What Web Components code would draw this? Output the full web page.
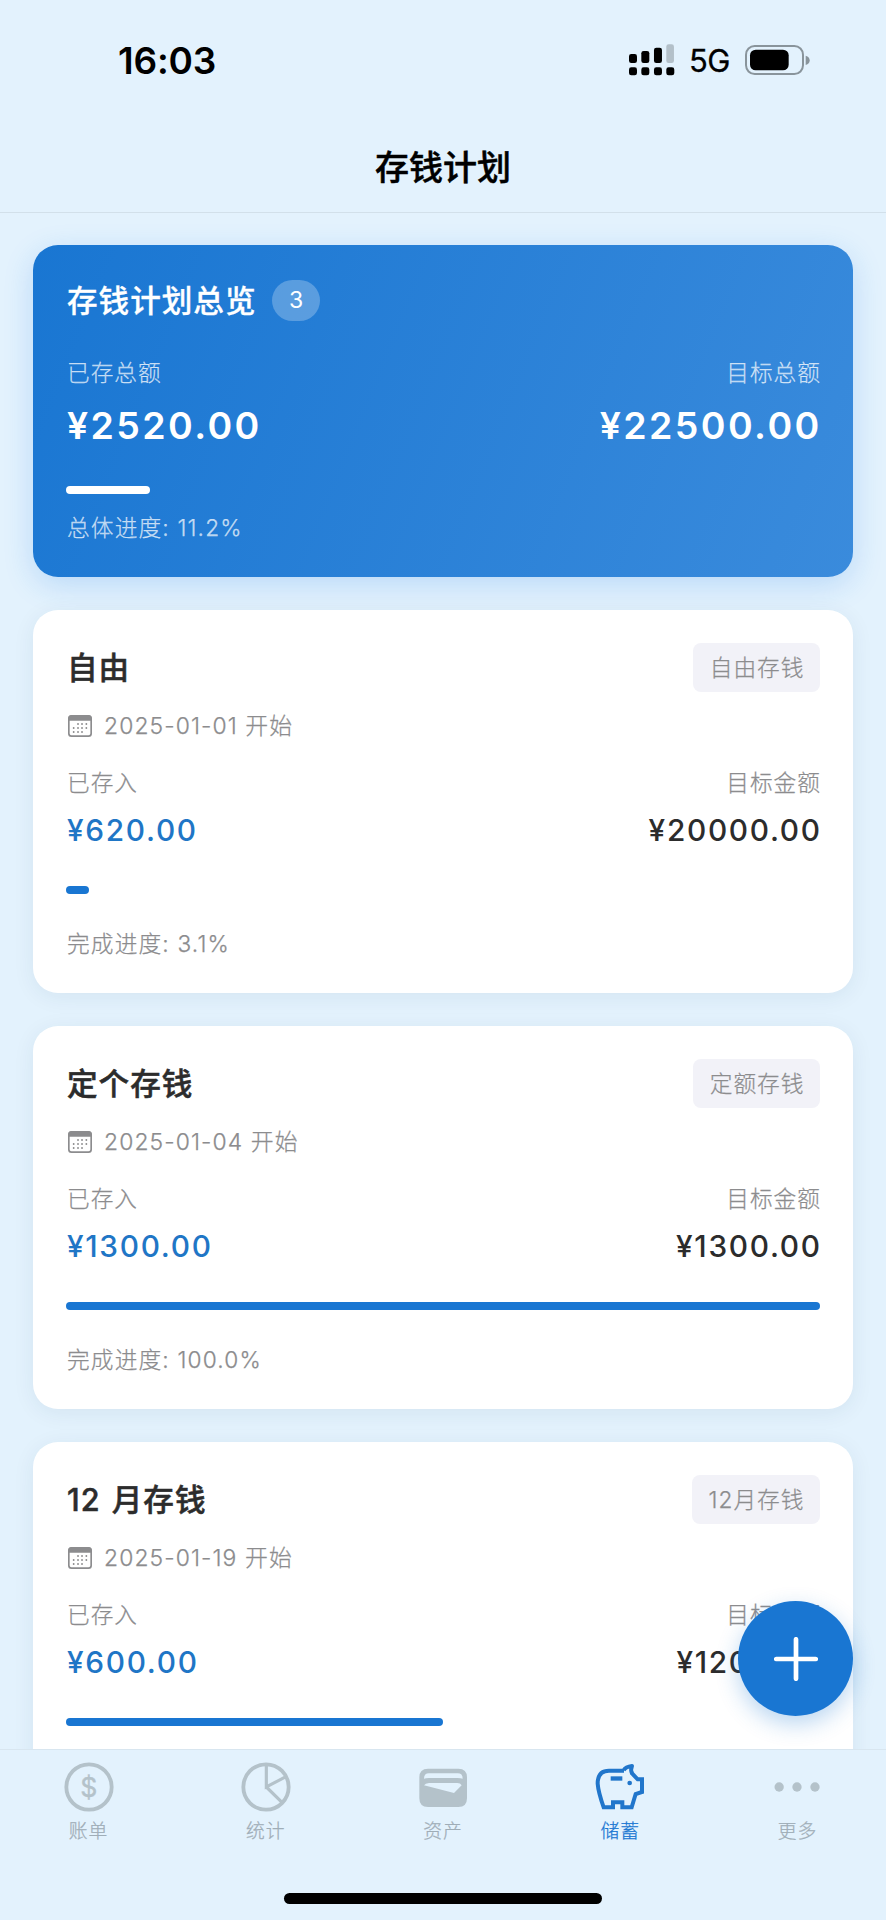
<!DOCTYPE html>
<html lang="zh-CN">
<head>
<meta charset="utf-8">
<title>存钱计划</title>
<style>
  html, body { margin: 0; height: 100%; }
  body {
    --bg: #e3f2fd;
    --primary: #1976d2;
    --muted: #8c8c8e;
    --ink: #2c2c2c;
    background: var(--bg);
    font-family: Inter, "Noto Sans CJK SC", sans-serif;
    overflow: hidden;
  }
</style>
</head>
<body>
<savings-app>
  <overview-card heading="存钱计划总览" count="3" saved="¥2520.00" target="¥22500.00" percent="11.2"></overview-card>
  <plan-card heading="自由" kind="自由存钱" date="2025-01-01" saved="¥620.00" target="¥20000.00" percent="3.1"></plan-card>
  <plan-card heading="定个存钱" kind="定额存钱" date="2025-01-04" saved="¥1300.00" target="¥1300.00" percent="100.0"></plan-card>
  <plan-card heading="12 月存钱" kind="12月存钱" date="2025-01-19" saved="¥600.00" target="¥1200.00" percent="50.0" no-caption></plan-card>
</savings-app>

<script>
class BaseElement extends HTMLElement {
  connectedCallback() {
    if (this.shadowRoot) return;
    this.attachShadow({ mode: 'open' }).innerHTML = this.render();
  }
  a(name) { return this.getAttribute(name) || ''; }
}

customElements.define('status-bar', class extends BaseElement {
  render() {
    return `<style>
      :host { display: flex; align-items: center; height: 121px; box-sizing: border-box; padding: 0 76.5px 0 118px; color: #000; }
      .time { font-size: 37px; font-weight: 600; line-height: 40px; letter-spacing: -0.2px; margin-right: auto; }
      .net { font-size: 31px; font-weight: 400; line-height: 40px; letter-spacing: -0.6px; margin: 1px 15px 0 14.5px; -webkit-text-stroke: .3px; }
      svg { display: block; flex: none; margin-top: -2px; }
    </style>
    <span class="time">16:03</span>
    <svg width="45.3" height="32" viewBox="558 131 136 96">
      <g fill="#000"><rect x="558" y="161" width="24" height="27" rx="7"/><rect x="595" y="152" width="24" height="36" rx="7"/><rect x="633" y="142" width="24" height="46" rx="7"/>
      <rect x="558" y="201" width="24" height="24" rx="7"/><rect x="595" y="201" width="24" height="24" rx="7"/><rect x="633" y="201" width="24" height="24" rx="7"/><rect x="670" y="201" width="24" height="24" rx="7"/></g>
      <rect x="670" y="132" width="23" height="56" rx="7" fill="#b3c0c9"/>
    </svg>
    <span class="net">5G</span>
    <svg width="64.7" height="30" viewBox="904 133 194 90">
      <rect x="907" y="136" width="171" height="84" rx="26" fill="none" stroke="#89949b" stroke-width="6"/>
      <rect x="919" y="147" width="116" height="62" rx="17" fill="#000"/>
      <path d="M1086 165Q1098 169 1098 179Q1098 190 1086 193Z" fill="#89949b"/>
    </svg>`;
  }
});

customElements.define('nav-title', class extends BaseElement {
  render() {
    return `<style>
      :host { display: flex; align-items: center; justify-content: center; height: 92px; box-sizing: border-box; padding-top: 3px; border-bottom: 1px solid #d2e0ea; color: #000; font-size: 34px; font-weight: 500; -webkit-text-stroke: .5px; line-height: 40px; }
    </style><slot></slot>`;
  }
});

customElements.define('progress-line', class extends BaseElement {
  render() {
    return `<style>
      :host { display: block; height: 8.3px; color: var(--primary); }
      div { height: 100%; width: ${this.a('value')}%; border-radius: 5px; background: currentColor; }
    </style><div></div>`;
  }
});

customElements.define('amount-pair', class extends BaseElement {
  render() {
    return `<style>
      :host { display: flex; justify-content: space-between; }
      .col { display: flex; flex-direction: column; }
      .end { text-align: right; margin-right: -1px; }
      .end .value { margin-right: -.7px; }
      .label { font-size: 22.7px; font-weight: 300; -webkit-text-stroke: .25px; line-height: 32px; letter-spacing: 1px; color: var(--label); }
      .value { margin-top: var(--value-gap, 7.5px); font-size: var(--value-size, 29.8px); font-weight: var(--value-weight, 470); line-height: 46px; letter-spacing: var(--value-spacing, 1.7px); }
      .saved { color: var(--saved); } .target { color: var(--target); }
    </style>
    <div class="col"><span class="label">${this.a('left')}</span><span class="value saved">${this.a('saved')}</span></div>
    <div class="col end"><span class="label">${this.a('right')}</span><span class="value target">${this.a('target')}</span></div>`;
  }
});

customElements.define('overview-card', class extends BaseElement {
  render() {
    return `<style>
      :host { display: block; height: 332px; box-sizing: border-box; padding: 35px 33px 0; border-radius: 25px; color: #fff;
        background: linear-gradient(112deg, #1976d2, #3a8bdc); box-shadow: 0 8px 30px rgba(25,118,230,.2);
        --label: rgba(255,255,255,.7); --saved: #fff; --target: #fff;
        --value-size: 37.5px; --value-weight: 620; --value-spacing: 2.4px; --value-gap: 13.5px; }
      header { display: flex; align-items: center; height: 41px; }
      h2 { margin: 0 0 0 1px; font-size: 30.6px; font-weight: 500; -webkit-text-stroke: .3px; letter-spacing: 1px; line-height: 41px; }
      .count { margin-left: 15.5px; width: 48px; height: 41px; border-radius: 21px; background: rgba(255,255,255,.25); font-size: 23px; line-height: 41px; text-align: center; }
      amount-pair { margin-top: 36px; padding-left: 1px; }
      progress-line { margin-top: 37.2px; color: #fff; }
      p { margin: 18px 0 0 1px; font-size: 22.7px; font-weight: 300; -webkit-text-stroke: .25px; line-height: 32px; letter-spacing: 1.15px; color: var(--label); }
    </style>
    <header><h2>${this.a('heading')}</h2><span class="count">${this.a('count')}</span></header>
    <amount-pair left="已存总额" right="目标总额" saved="${this.a('saved')}" target="${this.a('target')}"></amount-pair>
    <progress-line value="${this.a('percent')}"></progress-line>
    <p>总体进度: ${this.a('percent')}%</p>`;
  }
});

customElements.define('plan-card', class extends BaseElement {
  render() {
    const caption = this.hasAttribute('no-caption') ? '' : `<p>完成进度: ${this.a('percent')}%</p>`;
    return `<style>
      :host { display: block; flex: none; height: 383px; box-sizing: border-box; padding: 33px 33px 0; border-radius: 25px; background: #fff; box-shadow: 0 4px 22px rgba(0,50,90,.07);
        --label: var(--muted); --saved: #1f76c6; --target: var(--ink); }
      header { display: flex; align-items: center; justify-content: space-between; height: 49px; }
      h3 { margin: 0 0 0 1px; font-size: 30.6px; font-weight: 500; -webkit-text-stroke: .5px; letter-spacing: 1px; word-spacing: 2px; line-height: 49px; color: var(--ink); }
      .tag { padding: 0 15.5px 0 16.5px; border-radius: 8px; background: #f2f2f8; font-size: 22.7px; font-weight: 300; -webkit-text-stroke: .25px; letter-spacing: 1px; line-height: 49px; color: var(--muted); }
      .date { display: flex; align-items: center; margin: 18px 0 0 2px; height: 32px; color: var(--muted); font-size: 22.9px; font-weight: 300; -webkit-text-stroke: .25px; letter-spacing: 1.1px; line-height: 32px; }
      .date svg { margin-right: 12px; }
      amount-pair { margin-top: 25px; padding-left: 1px; }
      progress-line { margin-top: 33.2px; }
      p { margin: 34px 0 0 1px; font-size: 22.7px; font-weight: 300; -webkit-text-stroke: .25px; line-height: 32px; letter-spacing: 1.15px; color: var(--muted); }
    </style>
    <header><h3>${this.a('heading')}</h3><span class="tag">${this.a('kind')}</span></header>
    <div class="date"><svg width="24" height="22" viewBox="0 0 72 66"><rect x="2.5" y="2.5" width="67" height="61" rx="8" fill="none" stroke="#8c8c8e" stroke-width="5"/><path d="M1 17V10Q1 1 10 1H62Q71 1 71 10V17Z" fill="#8c8c8e"/>
      <g stroke="#8c8c8e" stroke-width="5.5" stroke-linecap="round"><path d="M30 27h.1M42 27h.1M55 27h.1M17 39h.1M30 39h.1M42 39h.1M55 39h.1M17 51h.1M30 51h.1M42 51h.1"/></g></svg><span>${this.a('date')} 开始</span></div>
    <amount-pair left="已存入" right="目标金额" saved="${this.a('saved')}" target="${this.a('target')}"></amount-pair>
    <progress-line value="${this.a('percent')}"></progress-line>
    ${caption}`;
  }
});

customElements.define('tab-item', class extends BaseElement {
  render() {
    return `<style>
      :host { display: flex; flex: 1; flex-direction: column; align-items: center; padding-top: 10px; color: #9fadb7; --icon: #b4c2ca; }
      :host([active]) { color: var(--primary); --icon: #2176cb; }
      .label { margin-top: 4px; font-size: 18.8px; font-weight: 300; -webkit-text-stroke: .25px; letter-spacing: 1px; line-height: 28px; }
      ::slotted(svg) { display: block; width: 54px; height: 54px; color: var(--icon); }
    </style><slot></slot><span class="label">${this.a('label')}</span>`;
  }
});

customElements.define('tab-bar', class extends BaseElement {
  render() {
    return `<style>
      :host { display: flex; flex-direction: column; align-items: center; height: 171px; box-sizing: border-box; background: var(--bg); border-top: 1px solid #d8e6f0; position: relative; }
      nav { display: flex; width: 100%; flex: 1; }
      .home { width: 318px; height: 11px; border-radius: 6px; background: #000; margin-bottom: 16px; }
      text { font-family: Inter, sans-serif; }
    </style>
    <nav>
      <tab-item label="账单"><svg viewBox="95 61 162 162"><circle cx="176" cy="142" r="68" fill="none" stroke="currentColor" stroke-width="11.5"/><text x="175.5" y="171" font-size="80" text-anchor="middle" fill="currentColor" stroke="currentColor" stroke-width="1">$</text></svg></tab-item>
      <tab-item label="统计"><svg viewBox="627 61 162 162"><g fill="none" stroke="currentColor"><circle cx="708" cy="142" r="68" stroke-width="11.5"/><path d="M709 74V142L768 111M709 142L756 188" stroke-width="9.5"/></g></svg></tab-item>
      <tab-item label="资产"><svg viewBox="1158 61 162 162"><path fill="currentColor" fill-rule="evenodd" d="M1194 87H1285Q1311 87 1311 113V176Q1311 202 1285 202H1194Q1168 202 1168 176V113Q1168 87 1194 87ZM1197 101Q1182 101 1182 117Q1187 115 1197 115H1282Q1293 115 1298 117Q1298 101 1283 101ZM1182 137L1272 160L1295 137Q1291 130 1282 130H1197Q1186 131 1182 137Z"/></svg></tab-item>
      <tab-item label="储蓄" active><svg viewBox="580 61 162 162"><g fill="none" stroke="currentColor" stroke-width="12"><path d="M673 93H628Q594 93 594 132Q596 158 612 203H640V188H668V203H696L708 163L727 157V119H714L695 99"/><path d="M672 92Q678 81 697 79Q692 90 697 101" stroke-linejoin="round"/></g><path d="M633 110H668V123H633Z" fill="currentColor"/><circle cx="690" cy="130" r="7" fill="currentColor"/></svg></tab-item>
      <tab-item label="更多"><svg viewBox="1111 61 162 162"><g fill="currentColor"><circle cx="1138.5" cy="142" r="14"/><circle cx="1192" cy="142" r="14"/><circle cx="1246" cy="142" r="14"/></g></svg></tab-item>
    </nav>
    <div class="home"></div>`;
  }
});

customElements.define('add-button', class extends BaseElement {
  render() {
    return `<style>
      :host { display: flex; align-items: center; justify-content: center; width: 115px; height: 115px; border-radius: 50%; background: var(--primary); box-shadow: 0 8px 22px rgba(25,118,210,.3); }
    </style><svg width="44" height="44" viewBox="0 0 44 44"><path d="M22 2.3V41.7M2.3 22H41.7" stroke="#fff" stroke-width="4.7" stroke-linecap="round"/></svg>`;
  }
});

customElements.define('savings-app', class extends BaseElement {
  render() {
    return `<style>
      :host { display: flex; flex-direction: column; width: 886px; height: 1920px; position: relative; overflow: hidden; background: var(--bg); }
      main { flex: 1; min-height: 0; display: flex; flex-direction: column; gap: 33px; padding: 32px 33px 0; overflow: hidden; }
      ::slotted(*) { flex: none; }
      add-button { position: absolute; right: 33px; bottom: 204px; }
    </style>
    <status-bar></status-bar>
    <nav-title>存钱计划</nav-title>
    <main><slot></slot></main>
    <tab-bar></tab-bar>
    <add-button></add-button>`;
  }
});
</script>
</body>
</html>
